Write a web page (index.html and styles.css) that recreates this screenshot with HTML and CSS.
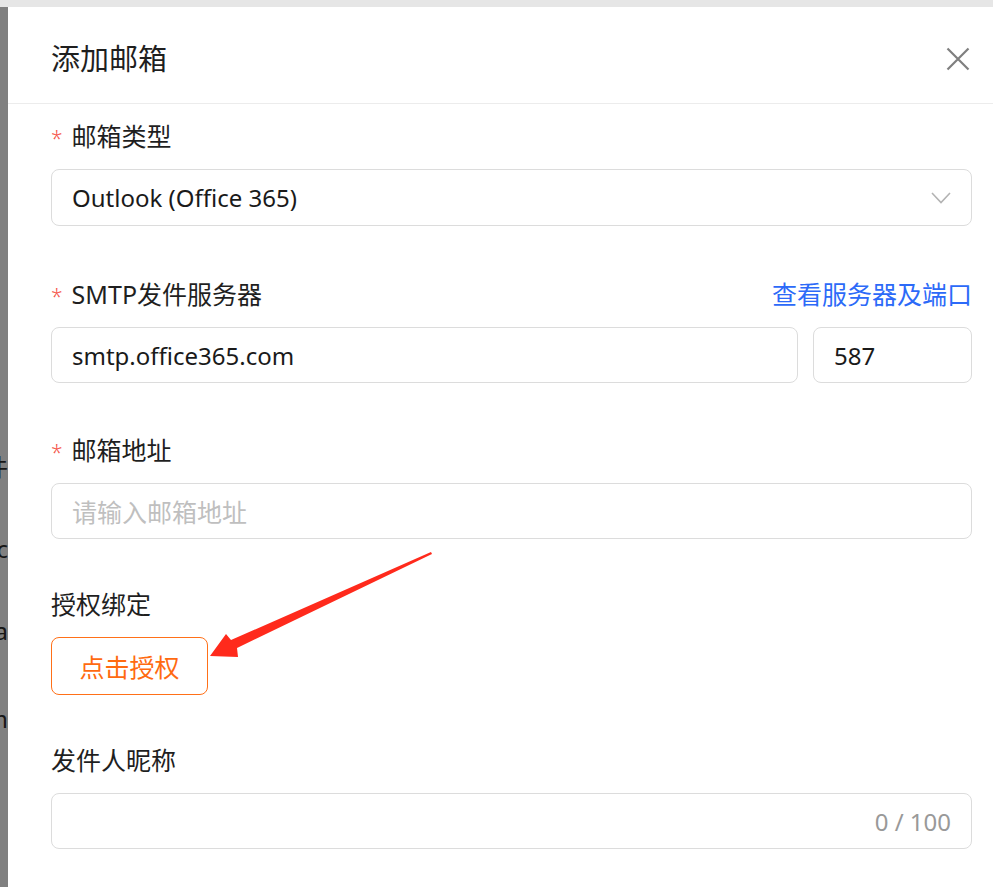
FILE: index.html
```html
<!DOCTYPE html>
<html>

<head>
  <meta charset="UTF-8">
  <title>添加邮箱</title>
  <link rel="stylesheet" href="styles.css">
</head>

<body>
  <div class="topbar"></div>
  <div class="stage">
    <!-- page behind the mask, only its right edge shows -->
    <div class="backdrop">
      <div class="bg-line bg-1">发件</div>
      <div class="bg-line bg-2">abc</div>
      <div class="bg-line bg-3">aaa</div>
      <div class="bg-line bg-4">mmm</div>
    </div>

    <div class="dialog">
      <div class="dialog-header">
        <span class="dialog-title">添加邮箱</span>
        <svg class="close" width="24" height="24" viewBox="0 0 24 24">
          <path d="M1.5 1.5 L22.5 22.5 M22.5 1.5 L1.5 22.5" stroke="#7f7f7f" stroke-width="2.2" fill="none" />
        </svg>
      </div>

      <div class="dialog-body">
        <div class="form-item first">
          <div class="label"><span class="req">*</span>邮箱类型</div>
          <div class="field select">
            <span class="value">Outlook (Office 365)</span>
            <svg class="chevron" width="20" height="12" viewBox="0 0 20 12">
              <path d="M1 1 L10 10.5 L19 1" stroke="#b3b3b3" stroke-width="1.6" fill="none" />
            </svg>
          </div>
        </div>

        <div class="form-item server">
          <div class="label label-row">
            <span><span class="req">*</span>SMTP发件服务器</span>
            <a href="#" class="link">查看服务器及端口</a>
          </div>
          <div class="field-row">
            <div class="field host"><span class="value">smtp.office365.com</span></div>
            <div class="field port"><span class="value">587</span></div>
          </div>
        </div>

        <div class="form-item">
          <div class="label"><span class="req">*</span>邮箱地址</div>
          <div class="field"><span class="placeholder">请输入邮箱地址</span></div>
        </div>

        <div class="form-item">
          <div class="label">授权绑定</div>
          <button class="auth-button">点击授权</button>
        </div>

        <div class="form-item">
          <div class="label">发件人昵称</div>
          <div class="field counter-field"><span class="counter">0 / 100</span></div>
        </div>
      </div>
    </div>

    <!-- red annotation arrow drawn over the form -->
    <svg class="arrow" width="993" height="880" viewBox="0 7 993 880">
      <polygon points="431,552 432,554 237,648 238,657 210,656 226,634 231,640" fill="#ff2a1c" />
    </svg>
  </div>
</body>

</html>
```

FILE: styles.css
```css
html,
body {
  margin: 0;
  padding: 0;
}

body {
  font-family: "Noto Sans", "Noto Sans CJK SC", sans-serif;
  background-color: #fff;
  color: #1f1f1f;
  width: 993px;
  height: 887px;
  overflow: hidden;
}

.topbar {
  height: 7px;
  background-color: #e6e6e6;
}

.stage {
  position: relative;
  display: flex;
  height: 880px;
}

.backdrop {
  width: 8px;
  flex: 0 0 8px;
  background-color: #808080;
  overflow: hidden;
  display: flex;
  flex-direction: column;
}

.bg-line {
  display: flex;
  justify-content: flex-end;
  white-space: nowrap;
  font-size: 24px;
  line-height: 30px;
  color: #161616;
}

.bg-1 {
  margin-top: 445px;
}

.bg-2 {
  margin-top: 52px;
}

.bg-3 {
  margin-top: 52px;
}

.bg-4 {
  margin-top: 58px;
}

.dialog {
  flex: 1;
  background-color: #fff;
}

.dialog-header {
  display: flex;
  justify-content: space-between;
  align-items: center;
  padding: 32px 23px 24px 43px;
  border-bottom: 1px solid #ececec;
}

.dialog-title {
  font-size: 29px;
  line-height: 40px;
  color: #1f1f1f;
}

.close {
  display: block;
}

.dialog-body {
  padding: 15px 21px 0 43px;
}

.form-item {
  margin-bottom: 48px;
}

.form-item.first {
  margin-bottom: 51px;
}

.form-item.server {
  margin-bottom: 50px;
}

.label {
  font-size: 25px;
  line-height: 34px;
  height: 34px;
  margin-bottom: 16px;
  color: #1f1f1f;
}

.label-row {
  display: flex;
  justify-content: space-between;
}

.req {
  color: #f5554a;
  margin-right: 9px;
  font-size: 21px;
  font-weight: 300;
}

.link {
  color: #2c6af8;
  text-decoration: none;
}

.field {
  box-sizing: border-box;
  height: 56px;
  border: 1px solid #dcdcdc;
  border-radius: 8px;
  display: flex;
  align-items: center;
  padding: 0 20px;
  font-size: 24px;
}

.select {
  height: 57px;
  justify-content: space-between;
}

.value {
  color: #1a1a1a;
}

.placeholder {
  color: #bfbfbf;
  font-size: 25px;
}

.field-row {
  display: flex;
  gap: 15px;
}

.host {
  flex: 1;
}

.port {
  flex: 0 0 159px;
}

.auth-button {
  box-sizing: border-box;
  height: 58px;
  width: 157px;
  border: 1px solid #ff7018;
  border-radius: 8px;
  background-color: #fff;
  color: #ff6a10;
  font-family: inherit;
  font-size: 25px;
  padding: 0;
}

.counter-field {
  justify-content: flex-end;
}

.counter {
  color: #999;
  font-size: 24px;
}

.arrow {
  position: absolute;
  left: 0;
  top: 0;
  pointer-events: none;
}
```
